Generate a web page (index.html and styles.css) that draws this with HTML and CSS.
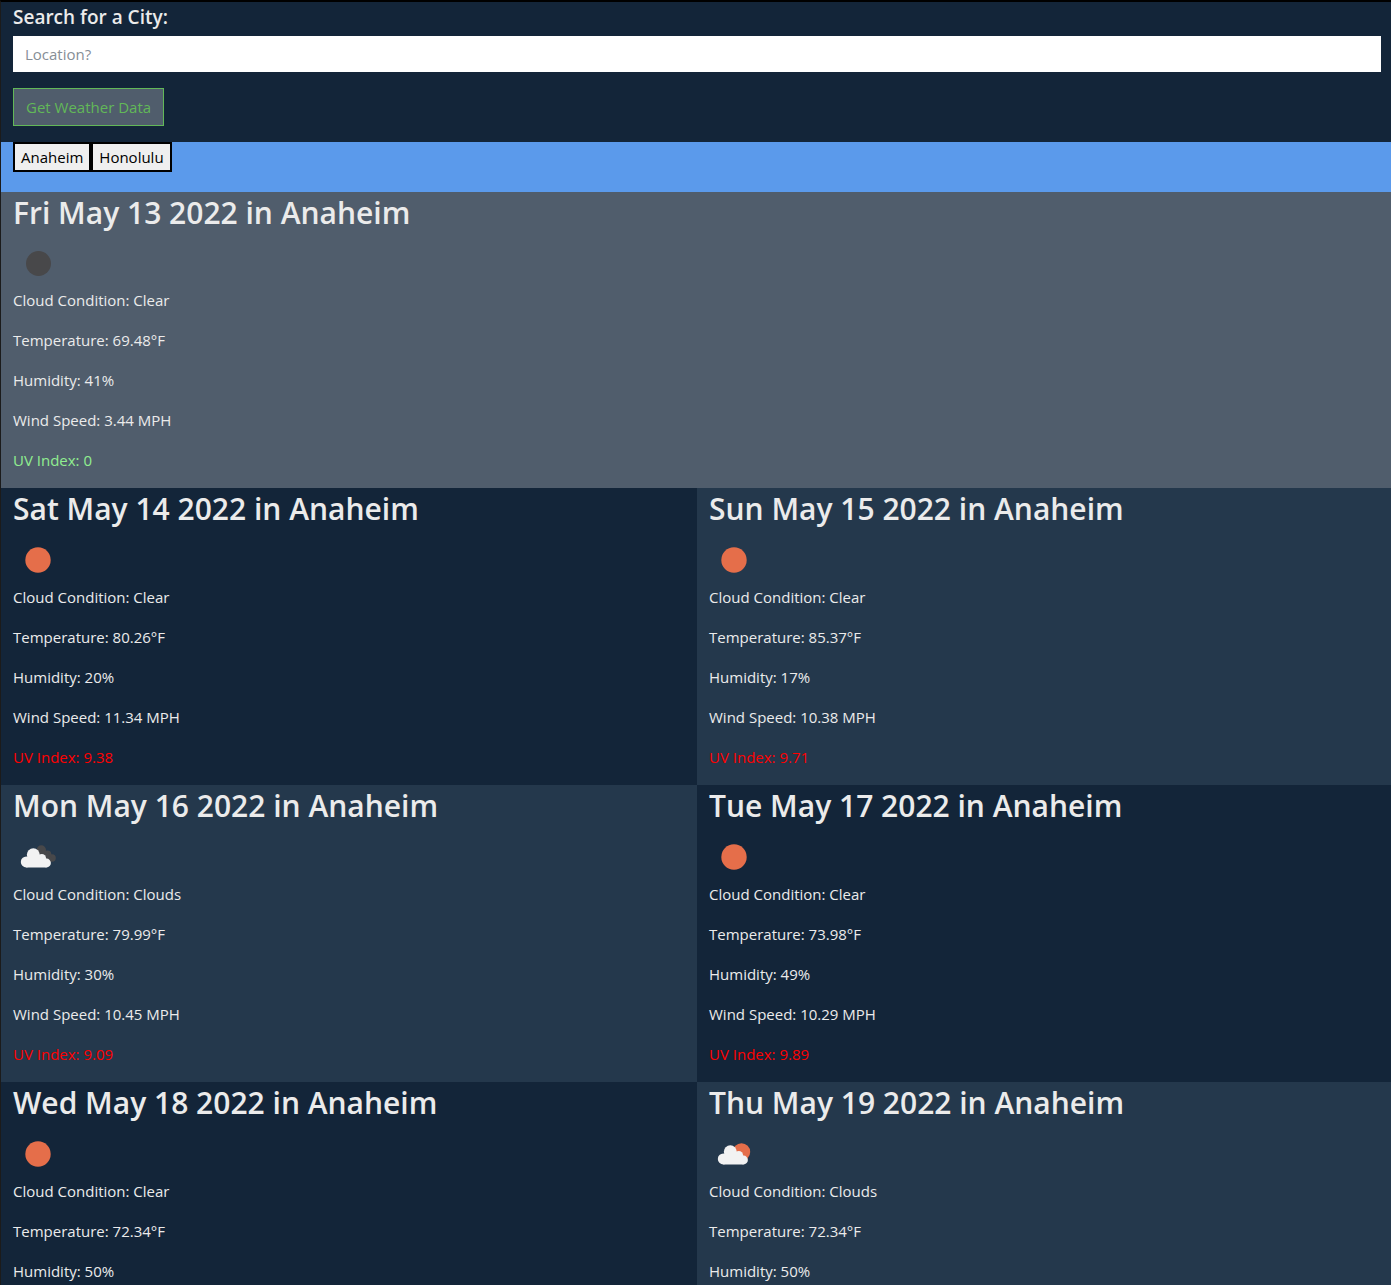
FILE: index.html
```html
<!DOCTYPE html>
<html lang="en">
<head>
<meta charset="utf-8">
<title>Weather Dashboard</title>
<link rel="stylesheet" href="styles.css">
</head>
<body>
<svg class="sprite" aria-hidden="true">
  <symbol id="clear-night" viewBox="0 0 50 50"><circle cx="25.5" cy="25.5" r="12.5" fill="#48484a"/></symbol>
  <symbol id="clear-day" viewBox="0 0 50 50"><circle cx="25" cy="25" r="12.7" fill="#e56e4a"/></symbol>
  <symbol id="cloud" viewBox="0 0 50 50">
    <g fill="#f2f2f2">
      <circle cx="13.3" cy="29.9" r="5.5"/>
      <circle cx="20.3" cy="22.8" r="6.500"/>
      <circle cx="28.800" cy="26.300" r="4.300"/>
      <circle cx="33.500" cy="31" r="4.400"/>
      <path d="M13.300 25.500h17l3.200 5v4.900H13.300z"/>
    </g>
  </symbol>
  <symbol id="clouds" viewBox="0 0 50 50">
    <g fill="#48484a">
      <circle cx="28.300" cy="18" r="4.700"/>
      <circle cx="34.500" cy="22.300" r="3.800"/>
      <circle cx="39" cy="26" r="3.800"/>
      <path d="M28 18l6 1 5 7-1 4-8-4z"/>
    </g>
    <use href="#cloud"/>
  </symbol>
  <symbol id="few-clouds" viewBox="0 0 50 50"><circle cx="32.500" cy="23" r="8.700" fill="#e56e4a"/><use href="#cloud" x="1"/></symbol>
</svg>
<div class="page">
  <header class="search">
    <form>
      <label class="search-label" for="city">Search for a City:</label>
      <input class="search-input" id="city" type="text" placeholder="Location?">
      <button class="search-button" type="button">Get Weather Data</button>
    </form>
  </header>
  <nav class="history">
    <button class="history-button" type="button">Anaheim</button>
    <button class="history-button" type="button">Honolulu</button>
  </nav>
  <main>
    <section class="day today">
      <h2>Fri May 13 2022 in Anaheim</h2>
      <svg class="icon" role="img" aria-label="Clear"><use href="#clear-night"/></svg>
      <p>Cloud Condition: Clear</p>
      <p>Temperature: 69.48°F</p>
      <p>Humidity: 41%</p>
      <p>Wind Speed: 3.44 MPH</p>
      <p class="uv-low">UV Index: 0</p>
    </section>
    <div class="forecast">
      <section class="day dark">
        <h2>Sat May 14 2022 in Anaheim</h2>
        <svg class="icon" role="img" aria-label="Clear"><use href="#clear-day"/></svg>
        <p>Cloud Condition: Clear</p>
        <p>Temperature: 80.26°F</p>
        <p>Humidity: 20%</p>
        <p>Wind Speed: 11.34 MPH</p>
        <p class="uv-high">UV Index: 9.38</p>
      </section>
      <section class="day light">
        <h2>Sun May 15 2022 in Anaheim</h2>
        <svg class="icon" role="img" aria-label="Clear"><use href="#clear-day"/></svg>
        <p>Cloud Condition: Clear</p>
        <p>Temperature: 85.37°F</p>
        <p>Humidity: 17%</p>
        <p>Wind Speed: 10.38 MPH</p>
        <p class="uv-high">UV Index: 9.71</p>
      </section>
      <section class="day light">
        <h2>Mon May 16 2022 in Anaheim</h2>
        <svg class="icon" role="img" aria-label="Clouds"><use href="#clouds"/></svg>
        <p>Cloud Condition: Clouds</p>
        <p>Temperature: 79.99°F</p>
        <p>Humidity: 30%</p>
        <p>Wind Speed: 10.45 MPH</p>
        <p class="uv-high">UV Index: 9.09</p>
      </section>
      <section class="day dark">
        <h2>Tue May 17 2022 in Anaheim</h2>
        <svg class="icon" role="img" aria-label="Clear"><use href="#clear-day"/></svg>
        <p>Cloud Condition: Clear</p>
        <p>Temperature: 73.98°F</p>
        <p>Humidity: 49%</p>
        <p>Wind Speed: 10.29 MPH</p>
        <p class="uv-high">UV Index: 9.89</p>
      </section>
      <section class="day dark">
        <h2>Wed May 18 2022 in Anaheim</h2>
        <svg class="icon" role="img" aria-label="Clear"><use href="#clear-day"/></svg>
        <p>Cloud Condition: Clear</p>
        <p>Temperature: 72.34°F</p>
        <p>Humidity: 50%</p>
      </section>
      <section class="day light">
        <h2>Thu May 19 2022 in Anaheim</h2>
        <svg class="icon" role="img" aria-label="Clouds"><use href="#few-clouds"/></svg>
        <p>Cloud Condition: Clouds</p>
        <p>Temperature: 72.34°F</p>
        <p>Humidity: 50%</p>
      </section>
    </div>
  </main>
</div>
</body>
</html>
```
FILE: styles.css
```css
* { box-sizing: border-box; }

body {
  margin: 0;
  height: 100vh;
  overflow: hidden;
  background: #132539;
  color: #ebebeb;
  font: 400 15px/24px "Open Sans", "Noto Sans", sans-serif;
}

.sprite { display: none; }

.page {
  border-top: 2px solid #000;
  border-left: 1px solid #1b1b1b;
}

.search {
  padding: 3px 10px 16px 12px;
  background: #132539;
}

.search-label {
  display: block;
  margin-bottom: 7px;
  font-size: 19px;
  font-weight: 600;
  line-height: 24px;
}

.search-input {
  display: block;
  width: 100%;
  height: 36px;
  margin-bottom: 16px;
  padding: 6px 12px;
  border: 0;
  background: #fff;
  color: #212529;
  font: inherit;
}

.search-input::placeholder { color: #868e96; opacity: 1; }

.search-button {
  display: block;
  height: 38px;
  padding: 6px 12px;
  border: 1px solid #62b858;
  background: #505d6c;
  color: #62b858;
  font: inherit;
}

.history {
  display: flex;
  padding: 0 12px 20px;
  background: #5b9aeb;
}

.history-button {
  height: 30px;
  padding: 1px 6px;
  border: 2px solid #000;
  background: #efefef;
  color: #000;
  font: inherit;
}

.day { padding: 0 12px; }
.today { background: #505d6c; }
.dark { background: #132539; }
.light { background: #24384c; }

.day h2 {
  margin: 0 0 4px;
  font-size: 30px;
  font-weight: 600;
  line-height: 42px;
}

.icon {
  display: block;
  width: 50px;
  height: 50px;
}

.day p {
  margin: 0;
  padding-bottom: 16px;
}

.day .uv-low { color: #90ee90; }
.day .uv-high { color: #f00; }

.forecast {
  display: grid;
  grid-template-columns: calc(50% + 1px) 1fr;
}

.forecast h2 { margin-bottom: 5px; }
```
